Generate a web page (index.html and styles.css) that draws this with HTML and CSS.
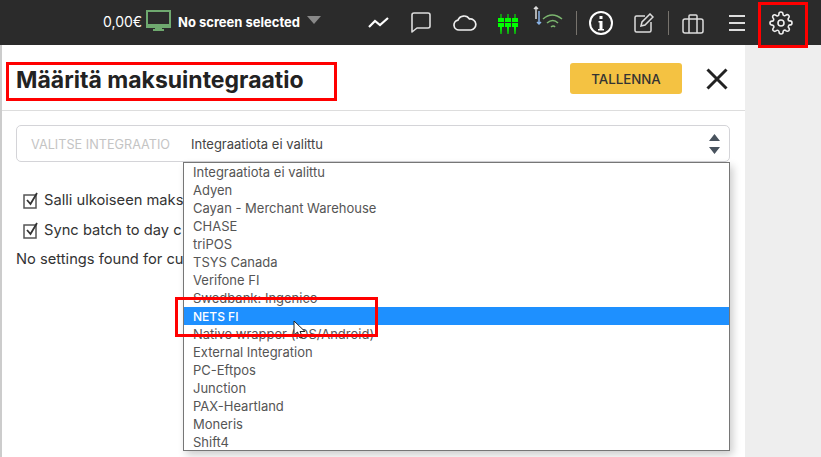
FILE: index.html
```html
<!DOCTYPE html>
<html lang="en">
<head>
  <meta charset="UTF-8">
  <title>Maksuintegraatio</title>
  <link rel="stylesheet" href="styles.css">
</head>
<body>
  <div class="topbar">
    <span class="sum">0,00€</span>
    <svg class="ico-monitor" width="25" height="21" viewBox="0 0 25 21"><path d="M1 1h23v16H1z" fill="none" stroke="#6fa96f" stroke-width="2"/><path d="M1 14h23v4H1zM9 18h7v1h2v2H7v-2h2z" fill="#6fa96f"/></svg>
    <span class="screen">No screen selected</span>
    <span class="caret"></span>
    <svg class="ico-trend" width="21" height="12" viewBox="0 0 21 12"><path d="M1 10l6-6 5 4 8-7" fill="none" stroke="#fff" stroke-width="2.2"/></svg>
    <svg class="ico-chat" width="20" height="21" viewBox="0 0 20 21"><path d="M1 3q0-2 2-2h14q2 0 2 2v11q0 2-2 2H6l-5 4z" fill="none" stroke="#ddd" stroke-width="1.6" stroke-linejoin="round"/></svg>
    <svg class="ico-cloud" width="24" height="17" viewBox="0 0 24 17"><path d="M6 16a5 5 0 0 1-1-9.900A6.500 6.500 0 0 1 16.500 5 5.400 5.400 0 0 1 18 16z" fill="none" stroke="#eee" stroke-width="1.700"/></svg>
    <svg class="ico-bars" width="20" height="20" viewBox="0 0 20 20" fill="#0f0"><path d="M2.500 0h1v4h-1zM0 4h6v4H0zM0 9h6v4H4l-.5 7h-1L2 13H0zM9.500 0h1v4h-1zM7 4h6v4H7zM7 9h6v4h-2l-.5 7h-1L9 13H7zM16.500 0h1v4h-1zM14 4h6v4h-6zM14 9h6v4h-2l-.5 7h-1L16 13h-2z"/></svg>
    <svg class="ico-wifi" width="30" height="24" viewBox="0 0 30 24"><path d="M3 1v12M1 3l2-2 2 2" fill="none" stroke="#ddd" stroke-width="1.500"/><path d="M6 5v13M4 16l2 2 2-2" fill="none" stroke="#8ab4e8" stroke-width="1.500"/><path d="M10 13q9-8 19 0M14 17q6-5 11 0M18 21q2.500-2 4 0" fill="none" stroke="#7cb66f" stroke-width="1.600"/></svg>
    <span class="sep sep-a"></span>
    <svg class="ico-info" width="24" height="24" viewBox="0 0 24 24"><circle cx="12" cy="12" r="11" fill="none" stroke="#fff" stroke-width="2"/><path d="M10.500 5h3v3h-3zM9.500 10h4v8h1.500v1.500H9v-1.500h1.500v-6.500h-1z" fill="#fff"/></svg>
    <svg class="ico-edit" width="20" height="20" viewBox="0 0 20 20"><path d="M11 3H2.500Q1 3 1 4.500v13Q1 19 2.500 19h13q1.500 0 1.500-1.500V9" fill="none" stroke="#ddd" stroke-width="1.500"/><path d="M7 13l1-4 8-8 3 3-8 8z" fill="none" stroke="#ddd" stroke-width="1.500"/></svg>
    <span class="sep sep-b"></span>
    <svg class="ico-case" width="22" height="20" viewBox="0 0 22 20"><path d="M3 5h16q2 0 2 2v10q0 2-2 2H3q-2 0-2-2V7q0-2 2-2zM7 5V2q0-1 1-1h6q1 0 1 1v3M7 5v14M15 5v14" fill="none" stroke="#ddd" stroke-width="1.500"/></svg>
    <div class="menu-ico"><span></span><span></span><span></span></div>
    <svg class="ico-gear" width="24" height="24" viewBox="0 0 24 24" fill="none" stroke="#eee" stroke-width="1.600" stroke-linecap="round" stroke-linejoin="round"><circle cx="12" cy="12" r="3"/><path d="M19.400 15a1.650 1.650 0 0 0 .33 1.820l.06.06a2 2 0 1 1-2.830 2.830l-.06-.06a1.650 1.650 0 0 0-2.820 1.170V21a2 2 0 1 1-4 0v-.09a1.650 1.650 0 0 0-2.820-1.170l-.06.06a2 2 0 1 1-2.830-2.830l.06-.06a1.650 1.650 0 0 0-1.170-2.820H3a2 2 0 1 1 0-4h.09a1.650 1.650 0 0 0 1.170-2.820l-.06-.06a2 2 0 1 1 2.830-2.830l.06.06a1.650 1.650 0 0 0 2.820-1.170V3a2 2 0 1 1 4 0v.09a1.650 1.650 0 0 0 2.820 1.170l.06-.06a2 2 0 1 1 2.830 2.830l-.06.06a1.650 1.650 0 0 0 1.170 2.820H21a2 2 0 1 1 0 4h-.09a1.650 1.650 0 0 0-1.510 1.090z"/></svg>
  </div>

  <div class="main">
    <div class="panel">
      <div class="panel-head">
        <h1>Määritä maksuintegraatio</h1>
        <button class="save">TALLENNA</button>
        <svg class="close" width="22" height="22" viewBox="0 0 22 22"><path d="M1.500 1.500l19 19M20.500 1.500l-19 19" stroke="#222" stroke-width="3"/></svg>
      </div>
      <div class="panel-body">
        <div class="select-row">
          <span class="select-label">VALITSE INTEGRAATIO</span>
          <span class="select-value">Integraatiota ei valittu</span>
          <svg class="updown" width="11" height="20" viewBox="0 0 11 20" fill="#49535e"><path d="M5.500 0L11 7H0zM0 13h11L5.500 20z"/></svg>
        </div>
        <div class="checks">
          <div class="check-row">
            <svg class="check" width="16" height="17" viewBox="0 0 16 17"><path d="M1 3h12v13H1z" fill="none" stroke="#555" stroke-width="1.500"/><path d="M4 8l3.500 4L14 1" fill="none" stroke="#333" stroke-width="1.800"/></svg>
            <span>Salli ulkoiseen maks</span>
          </div>
          <div class="check-row">
            <svg class="check" width="16" height="17" viewBox="0 0 16 17"><path d="M1 3h12v13H1z" fill="none" stroke="#555" stroke-width="1.500"/><path d="M4 8l3.500 4L14 1" fill="none" stroke="#333" stroke-width="1.800"/></svg>
            <span>Sync batch to day c</span>
          </div>
        </div>
        <p class="note">No settings found for cu</p>
      </div>
    </div>
  </div>

  <ul class="dropdown">
    <li>Integraatiota ei valittu</li>
    <li>Adyen</li>
    <li>Cayan - Merchant Warehouse</li>
    <li>CHASE</li>
    <li>triPOS</li>
    <li>TSYS Canada</li>
    <li>Verifone FI</li>
    <li>Swedbank: Ingenico</li>
    <li class="active">NETS FI</li>
    <li>Native wrapper (iOS/Android)</li>
    <li>External Integration</li>
    <li>PC-Eftpos</li>
    <li>Junction</li>
    <li>PAX-Heartland</li>
    <li>Moneris</li>
    <li>Shift4</li>
  </ul>

  <svg class="pointer" width="13" height="19" viewBox="0 0 13 19"><path d="M1 1v14l3.500-3 2.500 6 2.500-1-2.500-5.500H12z" fill="#fff" stroke="#222" stroke-width="1"/></svg>
  <div class="mark mark-title"></div>
  <div class="mark mark-gear"></div>
  <div class="mark mark-nets"></div>
</body>
</html>
```

FILE: styles.css
```css
html, body {
  height: 100%;
}

body {
  margin: 0;
  width: 821px;
  height: 457px;
  overflow: hidden;
  position: relative;
  display: flex;
  flex-direction: column;
  background: #eee;
  color: #333;
  font-family: Inter, Roboto, sans-serif;
}

.topbar {
  height: 45px;
  flex: none;
  display: flex;
  align-items: center;
  background: #2b2b2b;
  color: #fff;
  padding-left: 103px;
  box-sizing: border-box;
}

.sum {
  width: 43px;
  font-size: 14px;
  margin-bottom: 2px;
}

.screen {
  margin-left: 7px;
  width: 129px;
  font-size: 13px;
  font-weight: 700;
  white-space: nowrap;
  margin-bottom: 2px;
}

.caret {
  width: 0;
  height: 0;
  margin-bottom: 5px;
  border-left: 7px solid transparent;
  border-right: 7px solid transparent;
  border-top: 8px solid #888;
}

.ico-monitor { margin-bottom: 4px; }
.ico-trend { margin-left: 47px; }
.ico-chat { margin-left: 22px; margin-bottom: 1px; }
.ico-cloud { margin-left: 22px; }
.ico-bars { margin-left: 21px; margin-top: 2px; }
.ico-wifi { margin-left: 15px; margin-bottom: 10px; }

.sep {
  width: 1px;
  height: 24px;
  background: #77736d;
}

.sep-a { margin-left: 13px; }
.ico-info { margin-left: 12px; }
.ico-edit { margin-left: 21px; }
.sep-b { margin-left: 14px; }
.ico-case { margin-left: 13px; margin-top: 2px; }

.menu-ico {
  width: 16px;
  margin-left: 25px;
  display: flex;
  flex-direction: column;
  gap: 5px;
}

.menu-ico span {
  height: 2px;
  background: #ddd;
}

.ico-gear { margin-left: 24px; }

.main {
  flex: 1;
  display: flex;
}

.panel {
  width: 745px;
  box-sizing: border-box;
  background: #fff;
  border-left: 2px solid #ccc;
}

.panel-head {
  height: 66px;
  box-sizing: border-box;
  display: flex;
  align-items: center;
  padding: 2px 17px 0 14px;
  border-bottom: 1px solid #ddd;
}

h1 {
  margin: 0 0 -2px;
  flex: 1;
  font-size: 23px;
  font-weight: 700;
  color: #222;
}

.save {
  width: 112px;
  height: 31px;
  border: none;
  border-radius: 3px;
  background: #f4c242;
  color: #333;
  font-family: inherit;
  font-size: 13.300px;
  font-weight: 500;
}

.close {
  margin-left: 24px;
}

.panel-body {
  padding: 14px 15px 0 14px;
}

.select-row {
  height: 37px;
  box-sizing: border-box;
  display: flex;
  align-items: center;
  padding: 0 9px 0 14px;
  border: 1px solid #d4d4d8;
  border-radius: 5px;
}

.select-label {
  width: 160px;
  font-size: 12.700px;
  color: #c4c4c4;
  white-space: nowrap;
  margin-top: 1px;
}

.select-value {
  flex: 1;
  font-size: 13px;
  color: #444;
  margin-top: 1px;
}

.checks {
  margin-top: 23px;
}

.check-row {
  display: flex;
  align-items: center;
  gap: 5px;
  height: 30px;
  padding-left: 7px;
  font-size: 14.700px;
  white-space: nowrap;
}

.note {
  margin: 5px 0 0;
  font-size: 14.700px;
}

.dropdown {
  position: absolute;
  left: 183px;
  top: 162px;
  width: 547px;
  height: 289px;
  box-sizing: border-box;
  margin: 0;
  padding: 0;
  list-style: none;
  background: #fff;
  border: 1px solid #767676;
  box-shadow: 3px 4px 8px rgba(0, 0, 0, 0.2);
  font-size: 13px;
  color: #555;
}

.dropdown li {
  height: 18px;
  line-height: 19px;
  padding-left: 9px;
}

.dropdown li.active {
  background: #1e90ff;
  color: #fff;
  font-size: 12px;
  font-weight: 500;
}

.pointer {
  position: absolute;
  left: 293px;
  top: 320px;
}

.mark {
  position: absolute;
  box-sizing: border-box;
  border: 3px solid #f00;
}

.mark-title { left: 6px; top: 62px; width: 331px; height: 39px; }
.mark-gear { left: 758px; top: 2px; width: 50px; height: 46px; }
.mark-nets { left: 175px; top: 297px; width: 203px; height: 40px; }
```
